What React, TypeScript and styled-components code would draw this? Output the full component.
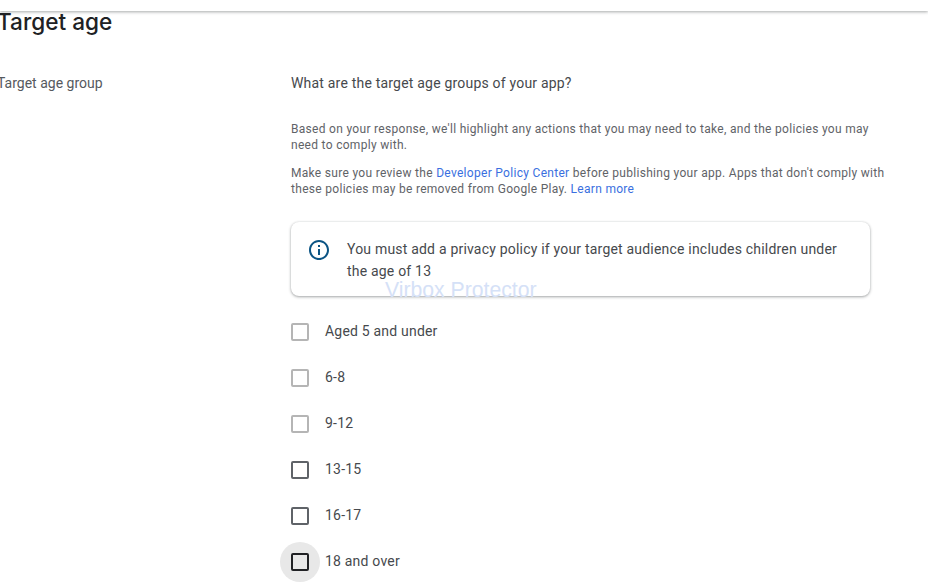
import styled, { createGlobalStyle } from 'styled-components';

const GlobalStyle = createGlobalStyle`
  html,
  body {
    background: #fff;
    height: 588px;
    margin: 0;
    overflow: hidden;
  }
`;

const Page = styled.div`
  color: #46494d;
  font-family: Roboto, 'Liberation Sans', sans-serif;
  height: 588px;
  overflow: hidden;
  position: relative;
  width: 928px;
`;

const TopBar = styled.div`
  background: #fff;
  box-shadow: 0 1px 3px rgba(60, 64, 67, 0.45);
  height: 11px;
`;

const Main = styled.main`
  margin-left: -3px;
`;

const Title = styled.h1`
  color: #202124;
  font-family: Inter, 'Open Sans', sans-serif;
  font-size: 22.6px;
  font-weight: 500;
  line-height: 21px;
  margin: 0 0 40px;
`;

const Section = styled.section`
  display: grid;
  grid-template-columns: 294px 1fr;
`;

const SectionLabel = styled.div`
  color: #55595e;
  font-size: 14px;
  line-height: 22px;
`;

const Question = styled.div`
  font-size: 14px;
  letter-spacing: 0.2px;
  line-height: 22px;
  margin-bottom: 27px;
`;

const HelpText = styled.p`
  color: #5f6368;
  font-size: 12px;
  letter-spacing: 0.3px;
  line-height: 16px;
  margin: 0 0 12px;
  width: 600px;
`;

const TextLink = styled.a`
  color: #3a6fe0;
  text-decoration: none;
`;

const Notice = styled.div`
  align-items: flex-start;
  background: #fff;
  border-radius: 8px;
  box-shadow: 0 1px 3px rgba(60, 64, 67, 0.45), 0 0 2px rgba(60, 64, 67, 0.12);
  box-sizing: border-box;
  display: flex;
  gap: 16px;
  height: 74px;
  margin: 25px 0 24px;
  padding: 16px;
  width: 579px;
`;

const NoticeIcon = styled.svg`
  fill: #0b5484;
  flex: none;
  height: 24px;
  width: 24px;
`;

const NoticeText = styled.div`
  font-size: 14px;
  letter-spacing: 0.2px;
  line-height: 22px;
  width: 500px;
`;

const OptionList = styled.div`
  display: flex;
  flex-direction: column;
  gap: 24px;
  isolation: isolate;
`;

const Option = styled.label`
  align-items: center;
  display: flex;
  font-size: 14px;
  gap: 16px;
  height: 22px;
  letter-spacing: 0.2px;
`;

type BoxTone = 'faint' | 'normal' | 'hover';

const boxColors: Record<BoxTone, string> = {
  faint: '#b5b5b5',
  normal: '#5f6368',
  hover: '#202124',
};

const Box = styled.span<{ $tone: BoxTone }>`
  border: 2px solid ${({ $tone }) => boxColors[$tone]};
  border-radius: 2px;
  box-sizing: border-box;
  flex: none;
  height: 18px;
  margin-top: 2px;
  position: relative;
  width: 18px;

  ${({ $tone }) =>
    $tone === 'hover' &&
    `
    &::before {
      background: #e8e8e8;
      border-radius: 50%;
      content: '';
      height: 40px;
      left: -13px;
      position: absolute;
      top: -13px;
      width: 40px;
      z-index: -1;
    }
  `}
`;

const Watermark = styled.div`
  color: #d5e1f7;
  font-family: 'Liberation Sans', sans-serif;
  font-size: 21.2px;
  left: 385px;
  line-height: 22px;
  position: absolute;
  top: 279px;
`;

const ageGroups: { label: string; tone: BoxTone }[] = [
  { label: 'Aged 5 and under', tone: 'faint' },
  { label: '6-8', tone: 'faint' },
  { label: '9-12', tone: 'faint' },
  { label: '13-15', tone: 'normal' },
  { label: '16-17', tone: 'normal' },
  { label: '18 and over', tone: 'hover' },
];

export default function App() {
  return (
    <Page>
      <GlobalStyle />
      <TopBar />
      <Main>
        <Title>Target age</Title>
        <Section>
          <SectionLabel>Target age group</SectionLabel>
          <div>
            <Question>What are the target age groups of your app?</Question>
            <HelpText>
              Based on your response, we'll highlight any actions that you may need to take, and the
              policies you may need to comply with.
            </HelpText>
            <HelpText>
              Make sure you review the <TextLink href="#">Developer Policy Center</TextLink> before
              publishing your app. Apps that don't comply with these policies may be removed from
              Google Play. <TextLink href="#">Learn more</TextLink>
            </HelpText>
            <Notice>
              <NoticeIcon viewBox="0 0 24 24">
                <path d="M11 7h2v2h-2zm0 4h2v6h-2zm1-9C6.48 2 2 6.48 2 12s4.48 10 10 10 10-4.48 10-10S17.52 2 12 2zm0 18c-4.41 0-8-3.59-8-8s3.59-8 8-8 8 3.59 8 8-3.59 8-8 8z" />
              </NoticeIcon>
              <NoticeText>
                You must add a privacy policy if your target audience includes children under the
                age of 13
              </NoticeText>
            </Notice>
            <OptionList>
              {ageGroups.map(({ label, tone }) => (
                <Option key={label}>
                  <Box $tone={tone} />
                  {label}
                </Option>
              ))}
            </OptionList>
          </div>
        </Section>
      </Main>
      <Watermark>Virbox Protector</Watermark>
    </Page>
  );
}
